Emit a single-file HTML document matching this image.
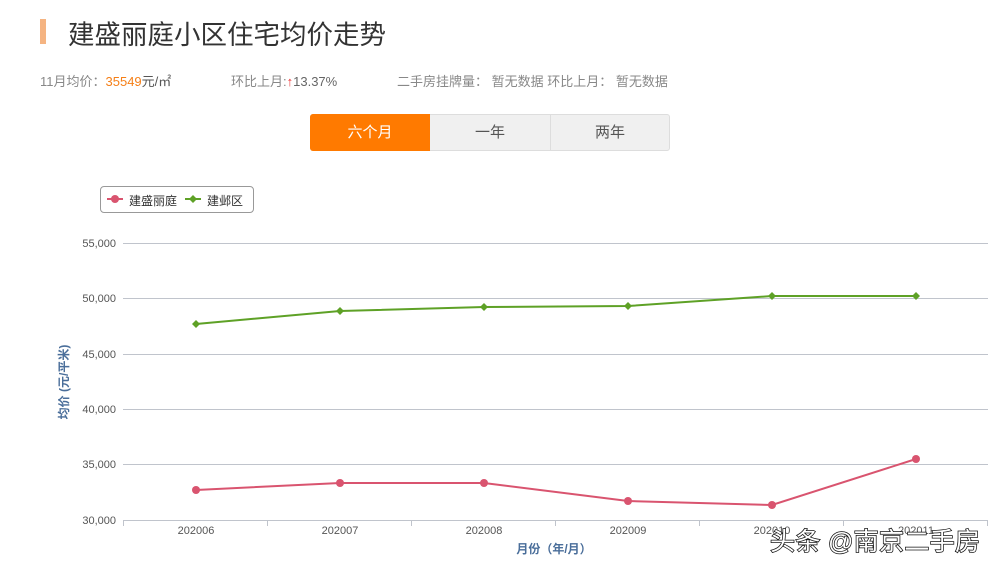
<!DOCTYPE html>
<html><head><meta charset="utf-8"><style>
body{margin:0;width:996px;height:569px;background:#fff;font-family:"Liberation Sans","Noto Sans CJK SC",sans-serif;position:relative;overflow:hidden}
.a{position:absolute;white-space:nowrap}
</style></head><body>
<div class="a" style="left:40px;top:19px;width:6px;height:25px;background:#f5b482"></div>
<div class="a" style="left:68px;top:13px;font-size:26.5px;color:#333">建盛丽庭小区住宅均价走势</div>
<div class="a" style="left:40px;top:71px;font-size:13px;color:#888">11月均价：<span style="color:#f57f17">35549</span><span style="color:#555">元/㎡</span></div>
<div class="a" style="left:231px;top:71px;font-size:13px;color:#888">环比上月:<span style="color:#e33">↑</span><span style="color:#666">13.37%</span></div>
<div class="a" style="left:397px;top:71px;font-size:13px;color:#888">二手房挂牌量： 暂无数据 环比上月： 暂无数据</div>
<div class="a" style="left:310px;top:114px;width:358px;height:35px;border:1px solid #ddd;border-radius:3px;background:#f0f0f0;font-size:15px;color:#555">
<div class="a" style="left:-1px;top:-1px;width:120px;height:37px;background:#ff7a00;color:#fff;line-height:37px;text-align:center;border-radius:3px 0 0 3px">六个月</div>
<div class="a" style="left:119px;top:0;width:120px;height:35px;line-height:35px;text-align:center;border-right:1px solid #ddd">一年</div>
<div class="a" style="left:240px;top:0;width:118px;height:35px;line-height:35px;text-align:center">两年</div>
</div>
<div class="a" style="left:100px;top:186px;width:152px;height:25px;border:1px solid #999;border-radius:4px;font-size:12px;color:#333">
<svg class="a" style="left:6px;top:7px" width="16" height="10"><line x1="0" y1="5" x2="16" y2="5" stroke="#d9546f" stroke-width="2"/><circle cx="8" cy="5" r="4" fill="#d9546f"/></svg>
<span class="a" style="left:28px;top:5px">建盛丽庭</span>
<svg class="a" style="left:84px;top:7px" width="16" height="10"><line x1="0" y1="5" x2="16" y2="5" stroke="#5ea126" stroke-width="2"/><path d="M8 1L12 5L8 9L4 5Z" fill="#5ea126"/></svg>
<span class="a" style="left:106px;top:5px">建邺区</span>
</div>
<svg class="a" style="left:0;top:0" width="996" height="569" font-family="Liberation Sans,Noto Sans CJK SC,sans-serif">
<g stroke="#c0c4cc" stroke-width="1">
<line x1="123" y1="243.5" x2="988" y2="243.5"/><line x1="123" y1="298.5" x2="988" y2="298.5"/><line x1="123" y1="354.5" x2="988" y2="354.5"/><line x1="123" y1="409.5" x2="988" y2="409.5"/><line x1="123" y1="464.5" x2="988" y2="464.5"/><line x1="123" y1="520.5" x2="988" y2="520.5"/>
<line x1="123.5" y1="520" x2="123.5" y2="526"/><line x1="267.5" y1="520" x2="267.5" y2="526"/><line x1="411.5" y1="520" x2="411.5" y2="526"/><line x1="555.5" y1="520" x2="555.5" y2="526"/><line x1="699.5" y1="520" x2="699.5" y2="526"/><line x1="843.5" y1="520" x2="843.5" y2="526"/><line x1="987.5" y1="520" x2="987.5" y2="526"/>
</g>
<g font-size="11" fill="#555" text-anchor="end">
<text x="116" y="247">55,000</text><text x="116" y="302">50,000</text><text x="116" y="358">45,000</text><text x="116" y="413">40,000</text><text x="116" y="468">35,000</text><text x="116" y="524">30,000</text>
</g>
<g font-size="11" fill="#555" text-anchor="middle">
<text x="196" y="534">202006</text><text x="340" y="534">202007</text><text x="484" y="534">202008</text><text x="628" y="534">202009</text><text x="772" y="534">202010</text><text x="916" y="534">202011</text>
</g>
<text x="554" y="553" font-size="12" fill="#4a6e9a" text-anchor="middle" font-weight="bold">月份（年/月）</text>
<text transform="translate(68,382) rotate(-90)" font-size="12" fill="#4a6e9a" text-anchor="middle" font-weight="bold">均价 (元/平米)</text>
<polyline points="196,324 340,311 484,307 628,306 772,296 916,296" fill="none" stroke="#5ea126" stroke-width="2"/>
<g fill="#5ea126"><path d="M196 320l4 4-4 4-4-4z"/><path d="M340 307l4 4-4 4-4-4z"/><path d="M484 303l4 4-4 4-4-4z"/><path d="M628 302l4 4-4 4-4-4z"/><path d="M772 292l4 4-4 4-4-4z"/><path d="M916 292l4 4-4 4-4-4z"/></g>
<polyline points="196,490 340,483 484,483 628,501 772,505 916,459" fill="none" stroke="#d9546f" stroke-width="2"/>
<g fill="#d9546f"><circle cx="196" cy="490" r="4"/><circle cx="340" cy="483" r="4"/><circle cx="484" cy="483" r="4"/><circle cx="628" cy="501" r="4"/><circle cx="772" cy="505" r="4"/><circle cx="916" cy="459" r="4"/></g>
<text x="770" y="550" font-size="25" fill="#fff" stroke="#111" stroke-width="1.5" paint-order="stroke" textLength="210">头条 @南京二手房</text>
</svg>
</body></html>
